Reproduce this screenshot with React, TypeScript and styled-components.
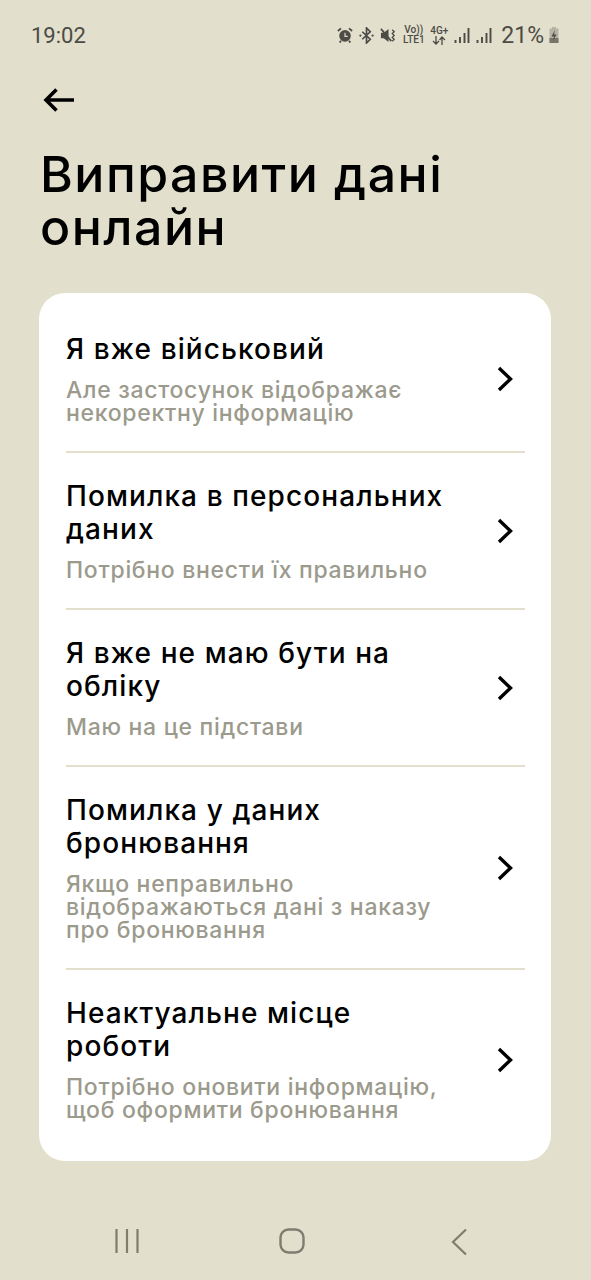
import React from "react";
import styled, { createGlobalStyle } from "styled-components";

const GlobalStyle = createGlobalStyle`
  html, body { margin: 0; padding: 0; background: #e2dfcc; }
  * { box-sizing: border-box; }
`;

const Screen = styled.div`
  width: 591px;
  height: 1280px;
  background: #e2dfcc;
  font-family: Inter, "Noto Sans", sans-serif;
  display: flex;
  flex-direction: column;
  overflow: hidden;
`;

const StatusBar = styled.div`
  height: 70px;
  padding: 0 31px;
  display: flex;
  align-items: center;
  justify-content: space-between;
  color: #4c4b45;
`;

const Clock = styled.span`
  font-size: 22px;
  font-family: Roboto, sans-serif;
`;

const StatusIcons = styled.div`
  display: flex;
  align-items: center;
  gap: 6px;
`;

const TinyStack = styled.span<{ $w: number }>`
  width: ${(p) => p.$w}px;
  display: flex;
  flex-direction: column;
  align-items: center;
  font-family: Roboto, sans-serif;
  font-size: 10px;
  line-height: 10px;
  font-weight: 500;
  white-space: nowrap;
`;

const Percent = styled.span`
  font-family: Roboto, sans-serif;
  font-size: 23px;
  margin: 0 -2px 0 3px;
`;

const BackButton = styled.button`
  border: 0;
  background: none;
  padding: 0;
  margin: 12px 0 0 42px;
  width: 34px;
  height: 34px;
  display: flex;
`;

const Title = styled.h1`
  margin: 32px 0 0 40px;
  font-weight: 500;
  font-size: 50px;
  line-height: 53px;
  letter-spacing: 1.5px;
  color: #000;
`;

const Card = styled.div`
  margin: 39px 40px 0 39px;
  padding: 13px 26px 12px 27px;
  background: #fff;
  border-radius: 26px;
  height: 868px;
`;

const Row = styled.div<{ $last?: boolean }>`
  display: flex;
  align-items: center;
  justify-content: space-between;
  padding: 27px 0 26px;
  border-bottom: ${(p) => (p.$last ? "0" : "2px solid #e2dfcc")};
`;

const RowText = styled.div`
  width: 400px;
  display: flex;
  flex-direction: column;
  gap: 13px;
`;

const RowTitle = styled.div`
  max-width: 385px;
  font-size: 28px;
  font-weight: 500;
  line-height: 33px;
  letter-spacing: 1.1px;
  color: #000;
`;

const RowSub = styled.div`
  font-size: 23px;
  line-height: 23px;
  letter-spacing: 0.7px;
  font-weight: 450;
  color: #9b9a8c;
`;

const Chevron = styled.svg`
  width: 16px;
  height: 26px;
  margin-right: 12px;
  flex: none;
`;

const NavBar = styled.div`
  height: 119px;
  padding: 67px 0 0 115px;
  display: grid;
  grid-template-columns: 164px 172px 1fr;
  align-items: start;
`;

const rows = [
  { title: "Я вже військовий", sub: "Але застосунок відображає некоректну інформацію" },
  { title: "Помилка в персональних даних", sub: "Потрібно внести їх правильно" },
  { title: "Я вже не маю бути на обліку", sub: "Маю на це підстави" },
  { title: "Помилка у даних бронювання", sub: "Якщо неправильно відображаються дані з наказу про бронювання" },
  { title: "Неактуальне місце роботи", sub: "Потрібно оновити інформацію, щоб оформити бронювання" },
];

function SignalBars(): JSX.Element {
  return (
    <svg width="16" height="17" viewBox="0 0 16 17">
      <path d="M1.5 13V16M6 10V16M10.5 6V16M14.5 1V16" stroke="#4c4b45" strokeWidth="1.9" />
    </svg>
  );
}

export default function App(): JSX.Element {
  return (
    <>
      <GlobalStyle />
      <Screen>
        <StatusBar>
          <Clock>19:02</Clock>
          <StatusIcons>
            <svg width="16" height="16" viewBox="0 0 18 18">
              <circle cx="9" cy="10" r="6.5" fill="#4c4b45" />
              <path d="M9 6.5V10.5H12" stroke="#e2dfcc" strokeWidth="1.3" fill="none" />
              <path d="M1 4.5L4.5 1.5M17 4.5L13.5 1.5M4.5 15.5L3 17.5M13.5 15.5L15 17.5" stroke="#4c4b45" strokeWidth="2" />
            </svg>
            <svg width="15" height="17" viewBox="0 0 16 18">
              <path d="M3.5 5L12 13L8 17V1L12 5L3.5 13" stroke="#4c4b45" strokeWidth="1.8" fill="none" />
              <circle cx="1.5" cy="9" r="1.2" fill="#4c4b45" />
              <circle cx="14.5" cy="9" r="1.2" fill="#4c4b45" />
            </svg>
            <svg width="17" height="17" viewBox="0 0 18 18">
              <path d="M1 6H4L9 2V16L4 12H1Z" fill="#4c4b45" />
              <path d="M1 2L12 15" stroke="#4c4b45" strokeWidth="1.8" />
              <path d="M13 3L15 5L13 7L15 9L13 11L15 13L13 15" stroke="#4c4b45" strokeWidth="1.4" fill="none" />
            </svg>
            <TinyStack $w={21}>
              <span>Vo))</span>
              <span>LTE1</span>
            </TinyStack>
            <TinyStack $w={18}>
              <span>4G+</span>
              <svg width="14" height="9" viewBox="0 0 14 9">
                <path d="M4 0V8M1 5L4 8L7 5M10 9V1M7.5 4L10 1L13 4" stroke="#4c4b45" strokeWidth="1.3" fill="none" />
              </svg>
            </TinyStack>
            <SignalBars />
            <SignalBars />
            <Percent>21%</Percent>
            <svg width="12" height="18" viewBox="0 0 11 18">
              <path d="M3.5 1H7.5V2.5H10V17H1V2.5H3.5Z" fill="#b5b3a4" />
              <path d="M1 12H10V17H1Z" fill="#77766a" />
              <path d="M6.5 4L3 10.5H5.5L4.5 15L8 8.5H5.5Z" fill="#4c4b45" />
            </svg>
          </StatusIcons>
        </StatusBar>

        <BackButton>
          <svg width="34" height="34" viewBox="0 0 34 34">
            <path d="M32 18H4M14.5 7.5L4 18L14.5 28.5" stroke="#000" strokeWidth="3.6" fill="none" />
          </svg>
        </BackButton>

        <Title>
          Виправити дані
          <br />
          онлайн
        </Title>

        <Card>
          {rows.map((r, i) => (
            <Row key={r.title} $last={i === rows.length - 1}>
              <RowText>
                <RowTitle>{r.title}</RowTitle>
                <RowSub>{r.sub}</RowSub>
              </RowText>
              <Chevron viewBox="0 0 16 26">
                <path d="M2 2L13.5 13L2 24" stroke="#000" strokeWidth="3.4" fill="none" />
              </Chevron>
            </Row>
          ))}
        </Card>

        <NavBar>
          <svg width="24" height="26" viewBox="0 0 24 26">
            <path d="M1.5 1V25M12 1V25M22.5 1V25" stroke="#7f7d70" strokeWidth="2.2" />
          </svg>
          <svg width="26" height="26" viewBox="0 0 26 26">
            <rect x="1.5" y="1.5" width="23" height="23" rx="8" stroke="#7f7d70" strokeWidth="2.4" fill="none" />
          </svg>
          <svg width="16" height="28" viewBox="0 0 16 28">
            <path d="M15 1.5L2 14L15 26.5" stroke="#7f7d70" strokeWidth="2.2" fill="none" />
          </svg>
        </NavBar>
      </Screen>
    </>
  );
}
